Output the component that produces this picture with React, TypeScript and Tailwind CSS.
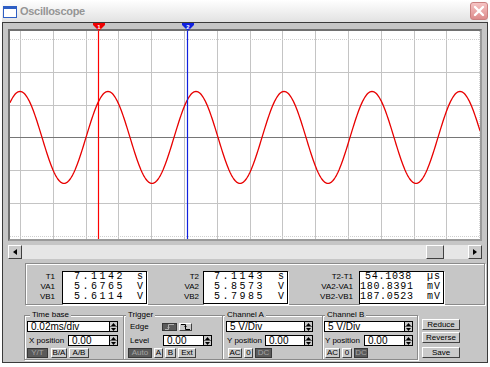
import React from "react";

const raised =
  "border border-t-white border-l-white border-r-[#404040] border-b-[#404040] bg-[#cacaca] text-black";
const sunkDark = "border border-[#383838] bg-[#5a5a5a] text-[#a4a4a4]";
const group =
  "h-[50px] border border-[#8a8a8a] shadow-[inset_1px_1px_0_#fff,1px_1px_0_#fff] flex flex-col";
const legend = "px-[2px] text-[8px] leading-[10px] bg-[#c6c6c6]";

const gridX = Array.from({ length: 15 }, (_, k) => Math.round(10 + 32.8 * k) + 0.5);
const gridY = Array.from({ length: 7 }, (_, k) => Math.round(8 + 32.8 * k) + 0.5);

function wave() {
  const pts: string[] = [];
  for (let x = 0; x <= 470; x++) {
    const y = 106.4 - 46 * Math.cos((2 * Math.PI * (x - 10)) / 88);
    pts.push(`${x === 0 ? "M" : "L"}${x},${y.toFixed(2)}`);
  }
  return pts.join(" ");
}

function Btn({
  children,
  className = "",
  dark = false,
}: {
  children: React.ReactNode;
  className?: string;
  dark?: boolean;
}) {
  return (
    <div
      className={`flex items-center justify-center text-[8px] leading-none ${dark ? sunkDark : raised} ${className}`}
    >
      {children}
    </div>
  );
}

function Spin() {
  return (
    <div className="flex h-full w-[8px] flex-col border-l border-black bg-[#cacaca]">
      <div className="flex flex-1 items-center justify-center border-b border-[#606060]">
        <svg width="5" height="3" viewBox="0 0 5 3">
          <path d="M0 3L2.5 0L5 3Z" fill="#000" />
        </svg>
      </div>
      <div className="flex flex-1 items-center justify-center">
        <svg width="5" height="3" viewBox="0 0 5 3">
          <path d="M0 0L2.5 3L5 0Z" fill="#000" />
        </svg>
      </div>
    </div>
  );
}

function Field({ value, className }: { value: string; className: string }) {
  return (
    <div className={`flex h-[11px] items-stretch border border-black bg-white ${className}`}>
      <span className="flex-1 pl-[3px] text-[10px] leading-[9px]">{value}</span>
      <Spin />
    </div>
  );
}

type Row = [string, string, string];

function Labels({ rows, className }: { rows: Row[]; className: string }) {
  return (
    <div className={`flex flex-col items-end pt-[1px] ${className}`}>
      {rows.map((r) => (
        <span key={r[0]} className="h-[10px] text-[8px] leading-[10px]">
          {r[0]}
        </span>
      ))}
    </div>
  );
}

function Readout({
  rows,
  valueCls,
  unitCls,
}: {
  rows: Row[];
  valueCls: string;
  unitCls: string;
}) {
  return (
    <div className="w-[85px] border border-black bg-white font-['Liberation_Mono',monospace] text-[10px] leading-[10px] shadow-[1px_1px_0_#fff]">
      {rows.map((r) => (
        <div key={r[0]} className="flex h-[10px]">
          <span className={`text-right ${valueCls}`}>{r[1]}</span>
          <span className={unitCls}>{r[2]}</span>
        </div>
      ))}
    </div>
  );
}

function Marker({ color, n, className }: { color: string; n: string; className: string }) {
  return (
    <svg width="12" height="8" viewBox="0 0 12 8" className={`absolute top-0 ${className}`}>
      <polygon points="0,0 12,0 12,2 6,8 0,2" fill={color} />
      <text x="6" y="5.5" textAnchor="middle" fontSize="6" fontWeight="bold" fill="#fff" fontFamily="Liberation Sans, sans-serif">
        {n}
      </text>
    </svg>
  );
}

export default function App() {
  const r1: Row[] = [
    ["T1", "7.1142", "s"],
    ["VA1", "5.6765", "V"],
    ["VB1", "5.6114", "V"],
  ];
  const r2: Row[] = [
    ["T2", "7.1143", "s"],
    ["VA2", "5.8573", "V"],
    ["VB2", "5.7985", "V"],
  ];
  const r3: Row[] = [
    ["T2-T1", "54.1038", "µs"],
    ["VA2-VA1", "180.8391", "mV"],
    ["VB2-VB1", "187.0523", "mV"],
  ];

  return (
    <div className="h-[367px] w-[490px] overflow-hidden bg-white font-['Liberation_Sans',Arial,sans-serif] text-black">
      {/* title bar */}
      <div className="ml-[2px] flex h-[22px] w-[486px] items-center bg-linear-to-b from-white to-[#e2e2e2]">
        <svg width="14" height="12" viewBox="0 0 14 12" className="ml-[1px] mt-[2px]">
          <rect x="0.5" y="0.5" width="13" height="11" fill="#fff" stroke="#2f5fc4" />
          <rect x="0.5" y="0.5" width="13" height="2.5" fill="#2f5fc4" />
        </svg>
        <span className="ml-[3px] text-[11px] font-bold tracking-[-0.3px] text-[#959595]">Oscilloscope</span>
        <div className="ml-auto flex h-[18px] w-[18px] items-center justify-center rounded-[3px] border border-[#c98080] bg-linear-to-b from-[#f6c4c4] to-[#dc8c8c]">
          <svg width="12" height="12" viewBox="0 0 12 12">
            <path d="M2 2L10 10M10 2L2 10" stroke="#fff" strokeWidth="2.4" strokeLinecap="round" />
          </svg>
        </div>
      </div>

      {/* body */}
      <div className="relative ml-[2px] h-[341px] w-[486px] border border-[#3a3a3a] bg-[#c6c6c6]">
        <Marker color="#f00000" n="1" className="left-[90px]" />
        <Marker color="#1020e0" n="2" className="left-[179px]" />

        {/* screen */}
        <div className="ml-[5px] mt-[6px] h-[212px] w-[474px] border-2 border-[#9a9a9a] border-l-[#707070] border-t-[#707070] bg-white">
          <svg width="470" height="208" className="block">
            {gridX.map((x, i) => (
              <line
                key={`x${i}`}
                x1={x}
                x2={x}
                y1={0}
                y2={208}
                stroke={i === 14 ? "#d4d4d4" : "#c4c4c4"}
                strokeDasharray={i === 14 ? "1 1" : undefined}
              />
            ))}
            {gridY.map((y, i) => (
              <line
                key={`y${i}`}
                x1={0}
                x2={470}
                y1={y}
                y2={y}
                stroke={i === 3 ? "#767676" : i === 0 || i === 6 ? "#d0d0d0" : "#c4c4c4"}
                strokeDasharray={i === 0 || i === 6 ? "1 1" : undefined}
              />
            ))}
            <path d={wave()} fill="none" stroke="#e80000" strokeWidth="1.3" />
            <line x1={88.5} x2={88.5} y1={0} y2={208} stroke="#ff0000" strokeWidth="1.2" />
            <line x1={177.5} x2={177.5} y1={0} y2={208} stroke="#1020e0" strokeWidth="1.2" />
          </svg>
        </div>

        {/* scrollbar */}
        <div className="ml-[5px] mt-[4px] flex h-[14px] w-[474px]">
          <div className={`flex w-[14px] items-center justify-center ${raised}`}>
            <svg width="4" height="6" viewBox="0 0 4 6">
              <path d="M4 0L0 3L4 6Z" fill="#000" />
            </svg>
          </div>
          <div className="flex flex-1 bg-[#e6e6e6] pl-[404px]">
            <div className={`w-[18px] ${raised}`} />
          </div>
          <div className={`flex w-[14px] items-center justify-center ${raised}`}>
            <svg width="4" height="6" viewBox="0 0 4 6">
              <path d="M0 0L4 3L0 6Z" fill="#000" />
            </svg>
          </div>
        </div>

        {/* measurement readouts */}
        <div className="ml-[22px] mt-[4px] flex h-[42px] w-[460px] border border-[#8a8a8a] pt-[7px] shadow-[inset_1px_1px_0_#fff,1px_1px_0_#fff]">
          <Labels rows={r1} className="w-[36px] pr-[7px]" />
          <Readout rows={r1} valueCls="w-[62px] tracking-[2.5px]" unitCls="ml-[12px]" />
          <Labels rows={r2} className="w-[56px] pr-[4px]" />
          <Readout rows={r2} valueCls="w-[61px] tracking-[2.5px]" unitCls="ml-[13px]" />
          <Labels rows={r3} className="w-[71px] pr-[6px]" />
          <Readout rows={r3} valueCls="w-[52px] tracking-[0.7px]" unitCls="ml-[15px] tracking-[1px]" />
        </div>

        {/* controls */}
        <div className="ml-[21px] mt-[5px] flex h-[50px]">
          <fieldset className={`${group} w-[100px]`}>
            <legend className={`ml-[5px] ${legend}`}>Time base</legend>
            <Field value="0.02ms/div" className="ml-[2px] mt-[1px] w-[91px]" />
            <div className="mt-[3px] flex h-[11px] items-center">
              <span className="ml-[4px] w-[39px] text-[8px]">X position</span>
              <Field value="0.00" className="w-[50px]" />
            </div>
            <div className="mt-[2px] flex h-[10px]">
              <Btn dark className="ml-[2px] w-[21px]">Y/T</Btn>
              <Btn className="ml-[3px] w-[16px]">B/A</Btn>
              <Btn className="ml-[2px] w-[20px]">A/B</Btn>
            </div>
          </fieldset>

          <fieldset className={`${group} -ml-px w-[100px]`}>
            <legend className={`ml-[2px] ${legend}`}>Trigger</legend>
            <div className="mt-[1px] flex h-[11px] items-center">
              <span className="ml-[6px] w-[32px] text-[8px]">Edge</span>
              <Btn dark className="h-[8px] w-[15px]">
                <svg width="9" height="6" viewBox="0 0 9 6">
                  <path d="M0 5.5H3.5V0.5H9M3.5 3L2.5 4M3.5 3L4.5 4" stroke="#b0b0b0" fill="none" />
                </svg>
              </Btn>
              <Btn className="ml-[2px] h-[8px] w-[13px]">
                <svg width="9" height="6" viewBox="0 0 9 6">
                  <path d="M0 0.5H4.5V5.5H9M4.5 3L3.5 2M4.5 3L5.5 2" stroke="#000" fill="none" />
                </svg>
              </Btn>
            </div>
            <div className="mt-[3px] flex h-[11px] items-center">
              <span className="ml-[6px] w-[33px] text-[8px]">Level</span>
              <Field value="0.00" className="w-[49px]" />
            </div>
            <div className="mt-[2px] flex h-[10px]">
              <Btn dark className="ml-[4px] w-[24px]">Auto</Btn>
              <Btn className="ml-[2px] w-[9px]">A</Btn>
              <Btn className="ml-[2px] w-[11px]">B</Btn>
              <Btn className="ml-[2px] w-[18px]">Ext</Btn>
            </div>
          </fieldset>

          <fieldset className={`${group} -ml-px w-[101px]`}>
            <legend className={`ml-[2px] ${legend}`}>Channel A</legend>
            <Field value="5 V/Div" className="ml-[3px] mt-[1px] w-[87px]" />
            <div className="mt-[3px] flex h-[11px] items-center">
              <span className="ml-[4px] w-[38px] text-[8px]">Y position</span>
              <Field value="0.00" className="w-[48px]" />
            </div>
            <div className="mt-[2px] flex h-[10px]">
              <Btn className="ml-[5px] w-[14px]">AC</Btn>
              <Btn className="ml-[2px] w-[9px]">0</Btn>
              <Btn dark className="ml-[2px] w-[17px]">DC</Btn>
            </div>
          </fieldset>

          <fieldset className={`${group} -ml-px w-[96px]`}>
            <legend className={`ml-[2px] ${legend}`}>Channel B</legend>
            <Field value="5 V/Div" className="ml-[1px] mt-[1px] w-[89px]" />
            <div className="mt-[3px] flex h-[11px] items-center">
              <span className="ml-[2px] w-[39px] text-[8px]">Y position</span>
              <Field value="0.00" className="w-[49px]" />
            </div>
            <div className="mt-[2px] flex h-[10px]">
              <Btn className="ml-[2px] w-[15px]">AC</Btn>
              <Btn className="ml-[2px] w-[10px]">0</Btn>
              <Btn dark className="ml-[2px] w-[14px]">DC</Btn>
            </div>
          </fieldset>

          <div className="ml-[4px] flex flex-col">
            <Btn className="mt-[9px] h-[11px] w-[38px]">Reduce</Btn>
            <Btn className="mt-[2px] h-[11px] w-[38px]">Reverse</Btn>
            <Btn className="mt-[4px] h-[11px] w-[38px]">Save</Btn>
          </div>
        </div>
      </div>
    </div>
  );
}
